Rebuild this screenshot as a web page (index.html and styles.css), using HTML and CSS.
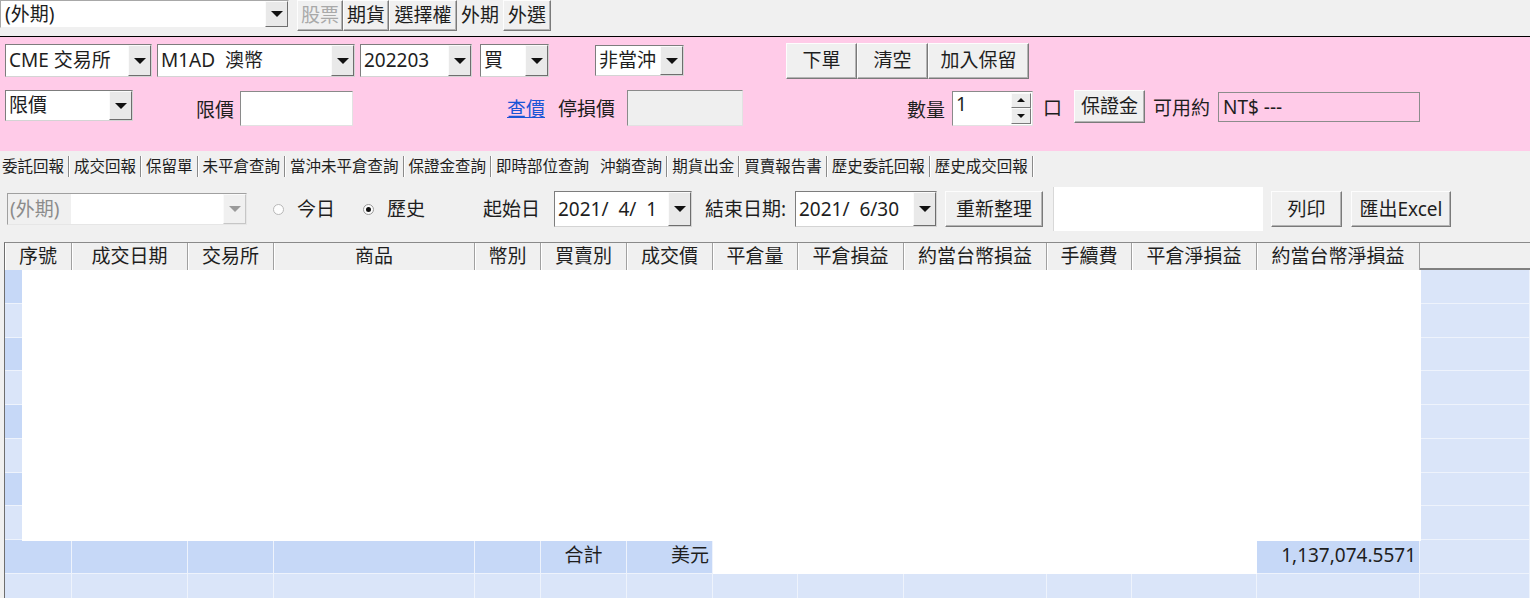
FILE: index.html
```html
<!DOCTYPE html>
<html lang="zh-Hant">
<head>
    <meta charset="UTF-8">
    <meta name="viewport" content="width=device-width, initial-scale=1.0">
    <title>沖銷查詢</title>
    <link rel="stylesheet" href="styles.css">
</head>
<body>
    <div class="topbar">
        <div class="combo combo-market">
            <span class="combo-text">(外期)</span>
            <span class="drop"><i class="tri"></i></span>
        </div>
        <div class="market-btns">
            <button class="btn mkt off">股票</button>
            <button class="btn mkt">期貨</button>
            <button class="btn mkt wide">選擇權</button>
            <button class="btn mkt flat">外期</button>
            <button class="btn mkt last">外選</button>
        </div>
    </div>

    <div class="order-panel">
        <div class="order-row row1">
            <div class="combo sel sel-exch"><span class="combo-text">CME 交易所</span><span class="drop"><i class="tri"></i></span></div>
            <div class="combo sel sel-prod"><span class="combo-text">M1AD  澳幣</span><span class="drop"><i class="tri"></i></span></div>
            <div class="combo sel sel-month"><span class="combo-text">202203</span><span class="drop"><i class="tri"></i></span></div>
            <div class="combo sel sel-side"><span class="combo-text">買</span><span class="drop"><i class="tri"></i></span></div>
            <div class="combo sel sel-daytrade"><span class="combo-text">非當沖</span><span class="drop"><i class="tri"></i></span></div>
            <div class="btn-group">
                <button class="btn act w71">下單</button>
                <button class="btn act w71">清空</button>
                <button class="btn act w101">加入保留</button>
            </div>
        </div>
        <div class="order-row row2">
            <div class="combo sel sel-type"><span class="combo-text">限價</span><span class="drop"><i class="tri"></i></span></div>
            <span class="lbl lbl-price">限價</span>
            <div class="field f-price"></div>
            <a class="link" href="#">查價</a>
            <span class="lbl lbl-stop">停損價</span>
            <div class="field f-stop off"></div>
            <span class="lbl lbl-qty">數量</span>
            <div class="field spin">
                <span class="spin-val">1</span>
                <span class="spin-btns">
                    <span class="spin-b"><i class="tri-up"></i></span>
                    <span class="spin-b"><i class="tri-sm"></i></span>
                </span>
            </div>
            <span class="lbl lbl-unit">口</span>
            <button class="btn act w71 margin-btn">保證金</button>
            <span class="lbl lbl-avail">可用約</span>
            <div class="avail-box">NT$ ---</div>
        </div>
    </div>

    <div class="tabs">
        <span class="tab first">委託回報</span>
        <span class="tab">成交回報</span>
        <span class="tab">保留單</span>
        <span class="tab">未平倉查詢</span>
        <span class="tab">當沖未平倉查詢</span>
        <span class="tab">保證金查詢</span>
        <span class="tab no-sep">即時部位查詢</span>
        <span class="tab current">沖銷查詢</span>
        <span class="tab">期貨出金</span>
        <span class="tab">買賣報告書</span>
        <span class="tab">歷史委託回報</span>
        <span class="tab">歷史成交回報</span>
    </div>

    <div class="filter-row">
        <div class="combo combo-off">
            <span class="combo-grey">(外期)</span>
            <span class="combo-text"></span>
            <span class="drop drop-off"><i class="tri"></i></span>
        </div>
        <label class="radio r-today"><i class="dot"></i><span>今日</span></label>
        <label class="radio r-hist"><i class="dot checked"></i><span>歷史</span></label>
        <span class="lbl lbl-start">起始日</span>
        <div class="combo date d-start"><span class="combo-text">2021/  4/  1</span><span class="drop"><i class="tri"></i></span></div>
        <span class="lbl lbl-end">結束日期:</span>
        <div class="combo date d-end"><span class="combo-text">2021/  6/30</span><span class="drop"><i class="tri"></i></span></div>
        <button class="btn act btn-refresh">重新整理</button>
        <div class="msg-box"></div>
        <button class="btn act btn-print">列印</button>
        <button class="btn act btn-excel">匯出Excel</button>
    </div>

    <div class="grid">
        <div class="g-row g-head">
            <div class="hc">序號</div>
            <div class="hc">成交日期</div>
            <div class="hc">交易所</div>
            <div class="hc">商品</div>
            <div class="hc">幣別</div>
            <div class="hc">買賣別</div>
            <div class="hc">成交價</div>
            <div class="hc">平倉量</div>
            <div class="hc">平倉損益</div>
            <div class="hc">約當台幣損益</div>
            <div class="hc">手續費</div>
            <div class="hc">平倉淨損益</div>
            <div class="hc">約當台幣淨損益</div>
            <div class="hc hc-fill"></div>
        </div>
        <div id="grid-body"></div>
        <div class="g-blank"></div>
    </div>

    <script>
        // 13 columns + filler, 10 visible rows; row 9 is the 合計 line
        const body = document.getElementById('grid-body');
        for (let r = 1; r <= 10; r++) {
            const row = document.createElement('div');
            row.className = 'g-row ' + (r % 2 ? 'dark' : 'light');
            for (let c = 0; c < 14; c++) {
                const cell = document.createElement('div');
                cell.className = 'bc';
                if (c === 13) cell.classList.add('bc-fill');
                if (r === 9) {
                    if (c === 5) { cell.textContent = '合計'; cell.classList.add('center'); }
                    if (c === 6) { cell.textContent = '美元'; cell.classList.add('right'); }
                    if (c >= 7 && c <= 11) cell.classList.add('blank');
                    if (c === 12) { cell.textContent = '1,137,074.5571'; cell.classList.add('right'); }
                }
                row.appendChild(cell);
            }
            body.appendChild(row);
        }
    </script>
</body>
</html>
```

FILE: styles.css
```css
* {
    box-sizing: border-box;
}

body {
    margin: 0;
    width: 1530px;
    height: 598px;
    overflow: hidden;
    background-color: #f0f0f0;
    font-family: "Noto Sans", "Noto Sans CJK TC", sans-serif;
    font-size: 19px;
    color: #1e1e1e;
}

button {
    font: inherit;
    color: inherit;
    padding: 0;
    margin: 0;
    cursor: pointer;
}

/* ---- shared controls ---- */
.combo {
    display: flex;
    background-color: #fff;
    border: 1px solid;
    border-color: #7d7d7d #d4d4d4 #d4d4d4 #7d7d7d;
}

.combo-text {
    flex: 1;
    padding-left: 3px;
    white-space: pre;
    overflow: hidden;
    display: flex;
    align-items: center;
    line-height: 1;
}

.drop {
    width: 23px;
    background-color: #e9e9e9;
    border: 1px solid;
    border-color: #fbfbfb #6e6e6e #6e6e6e #fbfbfb;
    display: flex;
    align-items: center;
    justify-content: center;
}

.tri {
    width: 0;
    height: 0;
    border-left: 6px solid transparent;
    border-right: 6px solid transparent;
    border-top: 6px solid #111;
}

.btn {
    background-color: #f0f0f0;
    border: 1px solid;
    border-color: #fdfdfd #7a7a7a #7a7a7a #fdfdfd;
    box-shadow: inset -1px -1px 0 #b4b4b4;
    line-height: 1;
}

.lbl {
    white-space: nowrap;
    line-height: 1;
}

.field {
    background-color: #fff;
    border: 1px solid;
    border-color: #8a8a8a #e2e2e2 #e2e2e2 #8a8a8a;
}

/* ---- top bar ---- */
.topbar {
    display: flex;
    align-items: flex-start;
    height: 37px;
    border-bottom: 1px solid #000;
}

.combo-market {
    width: 289px;
    height: 28px;
    border-color: #a8a8a8 #f0f0f0 #f0f0f0 #a8a8a8;
}

.combo-market .combo-text {
    padding-left: 4px;
}

.market-btns {
    display: flex;
    margin-left: 8px;
}

.mkt {
    width: 46px;
    height: 31px;
}

.mkt.wide {
    width: 68px;
}

.mkt.off {
    color: #a9a9a9;
}

.mkt.flat {
    border-color: transparent;
    box-shadow: none;
}

.mkt.last {
    width: 48px;
}

/* ---- pink order panel ---- */
.order-panel {
    background-color: #ffcbe8;
    height: 114px;
    padding-top: 5px;
}

.order-row {
    display: flex;
    align-items: center;
    padding-left: 5px;
}

.row1 {
    height: 37px;
}

.row2 {
    height: 38px;
    margin-top: 10px;
}

.sel {
    height: 33px;
}

.sel-exch {
    width: 147px;
}

.sel-prod {
    width: 198px;
    margin-left: 5px;
}

.sel-month {
    width: 112px;
    margin-left: 5px;
}

.sel-side {
    width: 69px;
    margin-left: 8px;
}

.sel-daytrade {
    width: 89px;
    height: 31px;
    margin-left: 46px;
}

.btn-group {
    display: flex;
    margin-left: 102px;
}

.act {
    height: 36px;
}

.w71 {
    width: 71px;
}

.w101 {
    width: 101px;
}

.sel-type {
    width: 128px;
    height: 31px;
    margin-top: -5px;
}

.lbl-price {
    width: 44px;
    margin-left: 63px;
    padding-top: 4px;
}

.f-price {
    width: 113px;
    height: 35px;
}

.link {
    margin-left: 154px;
    width: 51px;
    color: #1a55d6;
    line-height: 1;
    padding-top: 2px;
}

.lbl-stop {
    width: 69px;
    padding-top: 2px;
}

.f-stop {
    width: 116px;
    height: 36px;
}

.field.off {
    background-color: #efefef;
}

.lbl-qty {
    width: 45px;
    margin-left: 164px;
    padding-top: 4px;
}

.spin {
    width: 81px;
    height: 35px;
    display: flex;
    justify-content: space-between;
}

.spin-val {
    padding: 1px 0 0 3px;
    line-height: 1.2;
}

.spin-btns {
    display: flex;
    flex-direction: column;
    width: 20px;
    margin: 1px 1px 1px 0;
}

.spin-b {
    flex: 1;
    background-color: #ececec;
    border: 1px solid;
    border-color: #fbfbfb #7a7a7a #7a7a7a #fbfbfb;
    display: flex;
    align-items: center;
    justify-content: center;
}

.tri-up {
    border-left: 4px solid transparent;
    border-right: 4px solid transparent;
    border-bottom: 4px solid #111;
}

.tri-sm {
    border-left: 4px solid transparent;
    border-right: 4px solid transparent;
    border-top: 4px solid #111;
}

.lbl-unit {
    width: 31px;
    margin-left: 10px;
}

.margin-btn {
    height: 33px;
    margin-top: -3px;
}

.lbl-avail {
    width: 65px;
    margin-left: 8px;
}

.avail-box {
    width: 202px;
    height: 30px;
    border: 1px solid #8c8c8c;
    padding: 4px 0 0 4px;
    line-height: 1.1;
    margin-top: -3px;
}

/* ---- tabs ---- */
.tabs {
    display: flex;
    align-items: center;
    height: 30px;
    font-size: 15.5px;
}

.tab {
    padding: 0 4px 0 5px;
    border-right: 1px solid #8a8a8a;
    box-shadow: 1px 0 0 #fff;
    line-height: 21px;
    white-space: nowrap;
}

.tab.first {
    padding-left: 2px;
}

.tab.no-sep {
    border-right-color: transparent;
    box-shadow: none;
}

.tab.current {
    padding-left: 6px;
}

/* ---- filter row ---- */
.filter-row {
    display: flex;
    align-items: center;
    height: 56px;
    padding-left: 7px;
}

.combo-off {
    width: 240px;
    height: 32px;
    border-color: #a0a0a0 #e6e6e6 #e6e6e6 #a0a0a0;
}

.combo-grey {
    width: 63px;
    background-color: #f0f0f0;
    color: #8c8c8c;
    display: flex;
    align-items: center;
    padding-left: 2px;
    line-height: 1;
}

.drop-off {
    background-color: #f0f0f0;
    border-color: #fafafa #c6c6c6 #c6c6c6 #fafafa;
}

.drop-off .tri {
    border-top-color: #9a9a9a;
}

.radio {
    display: flex;
    align-items: center;
    line-height: 1;
    white-space: nowrap;
    flex-shrink: 0;
}

.r-today {
    margin-left: 26px;
    width: 64px;
}

.r-hist {
    margin-left: 26px;
    width: 64px;
}

.dot {
    width: 11px;
    height: 11px;
    flex-shrink: 0;
    border-radius: 50%;
    border: 1px solid #b8b8b8;
    background-color: #fdfdfd;
    margin-right: 13px;
    display: flex;
    align-items: center;
    justify-content: center;
}

.dot.checked {
    border-color: #9a9a9a;
}

.dot.checked::after {
    content: "";
    width: 5px;
    height: 5px;
    border-radius: 50%;
    background-color: #111;
}

.lbl-start {
    width: 71px;
    margin-left: 56px;
}

.date {
    height: 36px;
}

.date .combo-text {
    padding-left: 3px;
}

.d-start {
    width: 138px;
}

.lbl-end {
    width: 90px;
    margin-left: 13px;
}

.d-end {
    width: 142px;
}

.btn-refresh {
    width: 98px;
    margin-left: 8px;
}

.msg-box {
    width: 210px;
    height: 44px;
    margin-left: 10px;
    background-color: #fff;
    border-left: 1px solid #d8d8d8;
}

.btn-print {
    width: 71px;
    margin-left: 8px;
}

.btn-excel {
    width: 100px;
    margin-left: 9px;
}

/* ---- result grid ---- */
.grid {
    position: relative;
    margin: 5px 0 0 4px;
    border-left: 1px solid #6e6e6e;
    border-top: 1px solid #8a8a8a;
    height: 360px;
}

.g-row {
    display: grid;
    grid-template-columns: 67px 116px 86px 201px 66px 86px 86px 85px 106px 143px 85px 125px 163px 1fr;
}

.g-head {
    height: 27px;
}

.hc {
    border-right: 1px solid #a0a0a0;
    box-shadow: inset 1px 0 0 #fff;
    text-align: center;
    line-height: 26px;
    white-space: nowrap;
}

.hc-fill {
    border-right: none;
    box-shadow: none;
    border-bottom: 2px solid #808080;
}

.g-row.dark,
.g-row.light {
    height: 33.75px;
}

.bc {
    border-right: 1px solid #eef3fc;
    border-bottom: 1px solid #eef3fc;
    line-height: 31px;
    padding: 0 3px;
    white-space: nowrap;
}

.dark .bc {
    background-color: #c6d8f7;
}

.light .bc,
.bc.bc-fill {
    background-color: #dae5f9;
}

.bc.blank {
    background-color: #fff;
    border-color: #fff;
}

.bc.center {
    text-align: center;
}

.bc.right {
    text-align: right;
}

/* empty white area the list paints over its rows */
.g-blank {
    position: absolute;
    left: 17px;
    top: 27px;
    width: 1399px;
    height: 271px;
    background-color: #fff;
}
```
